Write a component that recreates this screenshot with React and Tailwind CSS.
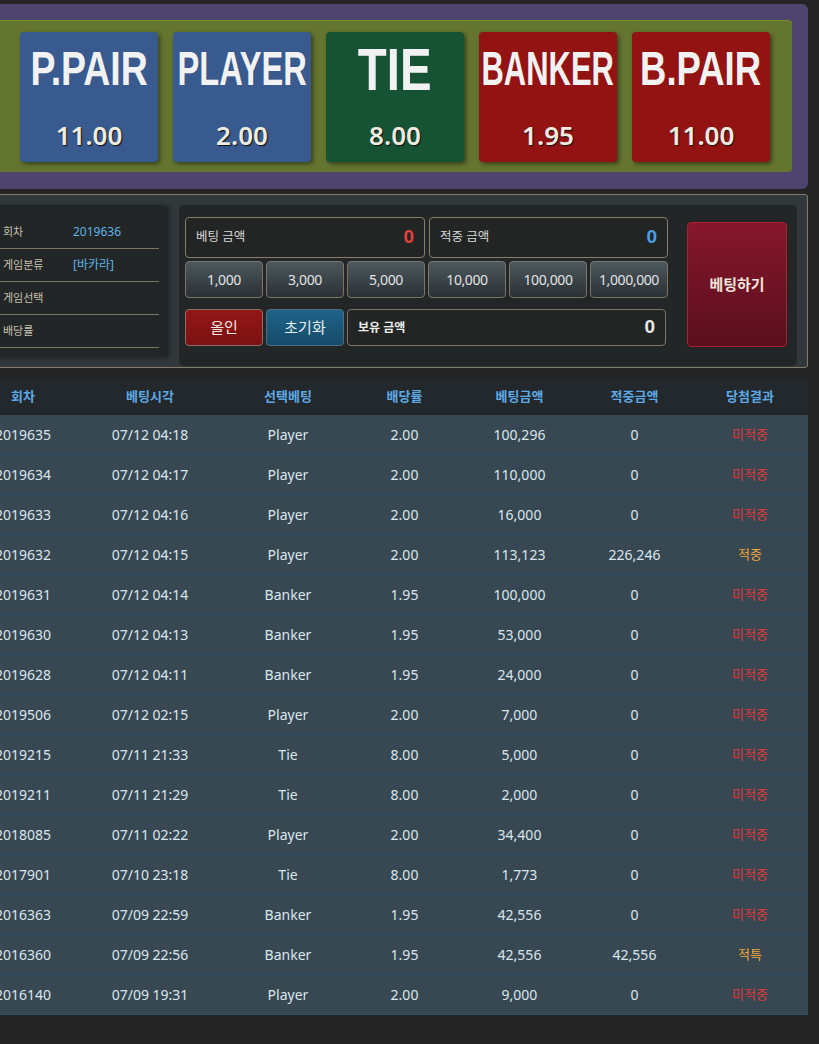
import React from 'react';

const cards = [
  { label: 'P.PAIR', odds: '11.00', bg: 'bg-[#385a8f]', text: 'text-[48px] scale-x-[0.78] pt-[13px]' },
  { label: 'PLAYER', odds: '2.00', bg: 'bg-[#385a8f]', text: 'text-[48px] scale-x-[0.68] pt-[13px]' },
  { label: 'TIE', odds: '8.00', bg: 'bg-[#165334]', text: 'text-[60px] scale-x-[0.79] pt-[8px]' },
  { label: 'BANKER', odds: '1.95', bg: 'bg-[#921312]', text: 'text-[48px] scale-x-[0.645] pt-[13px]' },
  { label: 'B.PAIR', odds: '11.00', bg: 'bg-[#921312]', text: 'text-[48px] scale-x-[0.76] pt-[13px]' },
];

const info = [
  ['회차', '2019636'],
  ['게임분류', '[바카라]'],
  ['게임선택', ''],
  ['배당률', ''],
];

const chips = ['1,000', '3,000', '5,000', '10,000', '100,000', '1,000,000'];

const rows = [
  ['2019635', '07/12 04:18', 'Player', '2.00', '100,296', '0', '미적중'],
  ['2019634', '07/12 04:17', 'Player', '2.00', '110,000', '0', '미적중'],
  ['2019633', '07/12 04:16', 'Player', '2.00', '16,000', '0', '미적중'],
  ['2019632', '07/12 04:15', 'Player', '2.00', '113,123', '226,246', '적중'],
  ['2019631', '07/12 04:14', 'Banker', '1.95', '100,000', '0', '미적중'],
  ['2019630', '07/12 04:13', 'Banker', '1.95', '53,000', '0', '미적중'],
  ['2019628', '07/12 04:11', 'Banker', '1.95', '24,000', '0', '미적중'],
  ['2019506', '07/12 02:15', 'Player', '2.00', '7,000', '0', '미적중'],
  ['2019215', '07/11 21:33', 'Tie', '8.00', '5,000', '0', '미적중'],
  ['2019211', '07/11 21:29', 'Tie', '8.00', '2,000', '0', '미적중'],
  ['2018085', '07/11 02:22', 'Player', '2.00', '34,400', '0', '미적중'],
  ['2017901', '07/10 23:18', 'Tie', '8.00', '1,773', '0', '미적중'],
  ['2016363', '07/09 22:59', 'Banker', '1.95', '42,556', '0', '미적중'],
  ['2016360', '07/09 22:56', 'Banker', '1.95', '42,556', '42,556', '적특'],
  ['2016140', '07/09 19:31', 'Player', '2.00', '9,000', '0', '미적중'],
];

const headers = ['회차', '베팅시각', '선택베팅', '배당률', '베팅금액', '적중금액', '당첨결과'];

const cols = 'grid grid-cols-[96px_158px_118px_115px_115px_115px_116px]';

export default function App() {
  return (
    <div className="min-h-[1044px] bg-[#242424] overflow-hidden font-['Noto_Sans','Noto_Sans_CJK_KR',sans-serif]">
      <div className="ml-[-25px] w-[833px] pt-[4px]">
        {/* bet board */}
        <div className="bg-[#4e446f] rounded-r-md pt-[16px] pb-[17px] pl-[16px] pr-[16px]">
          <div className="bg-[#64752f] border-t border-[#73922a] rounded-sm h-[152px] flex items-center gap-[15px] pl-[29px]">
            {cards.map((c) => (
              <div
                key={c.label}
                className={`${c.bg} w-[138px] h-[130px] rounded-[4px] shadow-[2px_2px_4px_rgba(0,0,0,0.45)] flex flex-col items-center`}
              >
                <span
                  className={`${c.text} inline-block whitespace-nowrap leading-none font-bold text-[#f2f2f2] font-['Liberation_Sans',sans-serif]`}
                >
                  {c.label}
                </span>
                <span className="mt-auto pb-[14px] leading-none text-[26px] font-semibold text-[#efebe0] [text-shadow:1px_1px_1px_#111]">
                  {c.odds}
                </span>
              </div>
            ))}
          </div>
        </div>

        {/* bet controls */}
        <div className="mt-[5px] border border-[#847c6b] bg-[#30383b] rounded-[3px] h-[174px] flex items-start pt-[10px] pl-[10px] pr-[10px] gap-[11px]">
          <div className="w-[182px] bg-[#222627] rounded-[4px] shadow-[1px_1px_4px_rgba(0,0,0,0.4)] pt-[11px] pb-[9px] px-[9px]">
            {info.map(([k, v]) => (
              <div key={k} className="flex items-center h-[33px] border-b border-[#7e7664] pl-[8px]">
                <span className="w-[70px] text-[11px] text-[#c8c2b0]">{k}</span>
                <span className="text-[12px] text-[#5fb2e6]">{v}</span>
              </div>
            ))}
          </div>

          <div className="w-[618px] h-[161px] bg-[#222627] rounded-[5px] flex items-start pt-[12px] pl-[6px] pr-[10px]">
            <div className="w-[483px] grid grid-cols-6 gap-x-[3px] content-start">
              <div className="col-span-3 h-[41px] border border-[#857d6c] rounded-[4px] bg-[#232525] flex items-center justify-between pl-[10px] pr-[10px]">
                <span className="text-[12.5px] text-[#d6d6d6]">베팅 금액</span>
                <span className="text-[19px] font-bold text-[#e4403e] font-['Liberation_Sans',sans-serif]">0</span>
              </div>
              <div className="col-span-3 h-[41px] border border-[#857d6c] rounded-[4px] bg-[#232525] flex items-center justify-between pl-[10px] pr-[10px] ml-[1px]">
                <span className="text-[12.5px] text-[#d6d6d6]">적중 금액</span>
                <span className="text-[19px] font-bold text-[#4a9fe6] font-['Liberation_Sans',sans-serif]">0</span>
              </div>

              {chips.map((c) => (
                <div
                  key={c}
                  className="mt-[3px] h-[37px] border border-[#7c7565] rounded-[4px] bg-gradient-to-b from-[#4d585e] to-[#2a3135] flex items-center justify-center text-[14px] tracking-[-0.4px] text-[#e2e2e2]"
                >
                  {c}
                </div>
              ))}

              <div className="mt-[11px] h-[37px] border border-[#8a6f64] rounded-[4px] bg-gradient-to-b from-[#951717] to-[#7c1111] flex items-center justify-center text-[15px] text-[#f0e4e4]">
                올인
              </div>
              <div className="mt-[11px] h-[37px] border border-[#4f6f80] rounded-[4px] bg-gradient-to-b from-[#1e6489] to-[#154b69] flex items-center justify-center text-[15px] text-[#e8eef2]">
                초기화
              </div>
              <div className="col-span-4 mr-[2px] mt-[11px] h-[37px] border border-[#7c7565] rounded-[4px] bg-[#232525] flex items-center justify-between pl-[10px] pr-[10px]">
                <span className="text-[12px] font-bold text-[#ececec]">보유 금액</span>
                <span className="text-[19px] font-bold text-[#e8e8e8] font-['Liberation_Sans',sans-serif]">0</span>
              </div>
            </div>

            <div className="ml-[19px] mt-[5px] w-[100px] h-[125px] border border-[#a8202e] rounded-[4px] bg-gradient-to-b from-[#87162c] to-[#5a0f1e] flex items-center justify-center text-[15px] font-bold text-[#f2e4dc]">
              베팅하기
            </div>
          </div>
        </div>

        {/* history table */}
        <div className="mt-[10px]">
          <div className={`${cols} h-[37px] items-center bg-[#22282c]`}>
            {headers.map((h) => (
              <div key={h} className="text-center text-[13px] font-bold text-[#5ea9e4]">
                {h}
              </div>
            ))}
          </div>
          {rows.map((r) => (
            <div
              key={r[0]}
              className={`${cols} h-[40px] items-center bg-[#384852] border-b border-[#2d5169] text-[14px] text-[#dae6ee]`}
            >
              {r.slice(0, 6).map((v, i) => (
                <div key={i} className="text-center">
                  {v}
                </div>
              ))}
              <div
                className={`text-center text-[13px] ${
                  r[6] === '미적중' ? 'text-[#e2363c]' : 'text-[#f0a63a]'
                }`}
              >
                {r[6]}
              </div>
            </div>
          ))}
        </div>
      </div>
    </div>
  );
}
